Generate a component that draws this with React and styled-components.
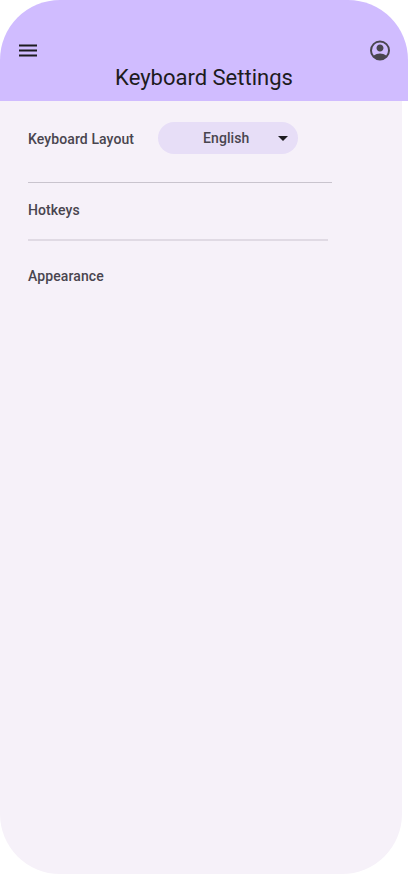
import React from "react";
import styled, { createGlobalStyle } from "styled-components";

const GlobalStyle = createGlobalStyle`
  *, *::before, *::after { box-sizing: border-box; }
  body { margin: 0; background: #fff; font-family: Roboto, "Liberation Sans", sans-serif; }
`;

const Screen = styled.div`
  width: 408px;
  height: 874px;
  display: flex;
  flex-direction: column;
`;

const Header = styled.header`
  height: 101px;
  flex: none;
  background: #d0bcff;
  border-radius: 60px 60px 0 0;
  padding-top: 38px;
`;

const Toolbar = styled.div`
  height: 26px;
  padding: 0 16px;
  display: flex;
  justify-content: space-between;
`;

const IconButton = styled.button`
  width: 24px;
  height: 24px;
  padding: 0;
  border: 0;
  background: none;
  color: ${(p) => p.$color};
  svg { display: block; }
`;

const Title = styled.h1`
  margin: 0;
  font-size: 22px;
  line-height: 28px;
  font-weight: 400;
  text-align: center;
  color: #1d1b20;
`;

const Content = styled.main`
  width: 402px;
  flex: 1;
  background: #f6f1f9;
  border-radius: 0 0 60px 60px;
  padding: 21px 28px 0;
`;

const Row = styled.div`
  height: ${(p) => p.$height}px;
  display: flex;
  align-items: center;
`;

const Label = styled.span`
  width: 130px;
  padding-top: ${(p) => p.$drop || 0}px;
  font-size: 14px;
  line-height: 20px;
  font-weight: 500;
  letter-spacing: 0.1px;
  color: #49454f;
`;

const Select = styled.button`
  width: 140px;
  height: 32px;
  border: 0;
  border-radius: 16px;
  background: #e7def7;
  padding: 0 10px 0 45px;
  display: flex;
  align-items: center;
  justify-content: space-between;
  font: 500 14px/20px Roboto, "Liberation Sans", sans-serif;
  letter-spacing: 0.1px;
  color: #49454f;
`;

const Divider = styled.hr`
  width: ${(p) => p.$width}px;
  height: ${(p) => p.$thickness}px;
  margin: ${(p) => p.$margin};
  border: 0;
  background: ${(p) => p.$color};
`;

export default function App() {
  return (
    <Screen>
      <GlobalStyle />
      <Header>
        <Toolbar>
          <IconButton $color="#1d1b20" aria-label="Menu">
            <svg width="24" height="24" viewBox="0 0 24 24" fill="currentColor">
              <path d="M3 18.5v-2h18v2zM3 13.5v-2h18v2zM3 8.5v-2h18v2z" />
            </svg>
          </IconButton>
          <IconButton $color="#49454f" aria-label="Account">
            <svg width="24" height="24" viewBox="0 -0.5 24 24" fill="currentColor">
              <path d="M5.85 17.1a11.2 11.2 0 0 1 2.85-1.54A9.7 9.7 0 0 1 12 15c1.15 0 2.25.19 3.3.56 1.05.38 2 .89 2.85 1.54A7.7 7.7 0 0 0 20 12c0-2.22-.78-4.1-2.34-5.66A7.71 7.71 0 0 0 12 4c-2.22 0-4.1.78-5.66 2.34A7.71 7.71 0 0 0 4 12a7.7 7.7 0 0 0 1.85 5.1ZM12 13a3.38 3.38 0 0 1-2.49-1.01A3.38 3.38 0 0 1 8.5 9.5c0-.98.34-1.81 1.01-2.49A3.38 3.38 0 0 1 12 6c.98 0 1.81.34 2.49 1.01.67.68 1.01 1.51 1.01 2.49s-.34 1.81-1.01 2.49A3.38 3.38 0 0 1 12 13Zm0 9a10 10 0 1 1 0-20 10 10 0 0 1 0 20Z" />
            </svg>
          </IconButton>
        </Toolbar>
        <Title>Keyboard Settings</Title>
      </Header>
      <Content>
        <Row $height={32}>
          <Label $drop={2}>Keyboard Layout</Label>
          <Select>
            English
            <svg width="10" height="5" viewBox="0 0 10 5" fill="#1d1b20">
              <path d="M0 0h10L5 5z" />
            </svg>
          </Select>
        </Row>
        <Divider $width={304} $thickness={1} $margin="28px 0 17px" $color="#c9c4ce" />
        <Row $height={20}>
          <Label>Hotkeys</Label>
        </Row>
        <Divider $width={300} $thickness={2} $margin="19px 0 25px" $color="#e0dae4" />
        <Row $height={20}>
          <Label>Appearance</Label>
        </Row>
      </Content>
    </Screen>
  );
}
